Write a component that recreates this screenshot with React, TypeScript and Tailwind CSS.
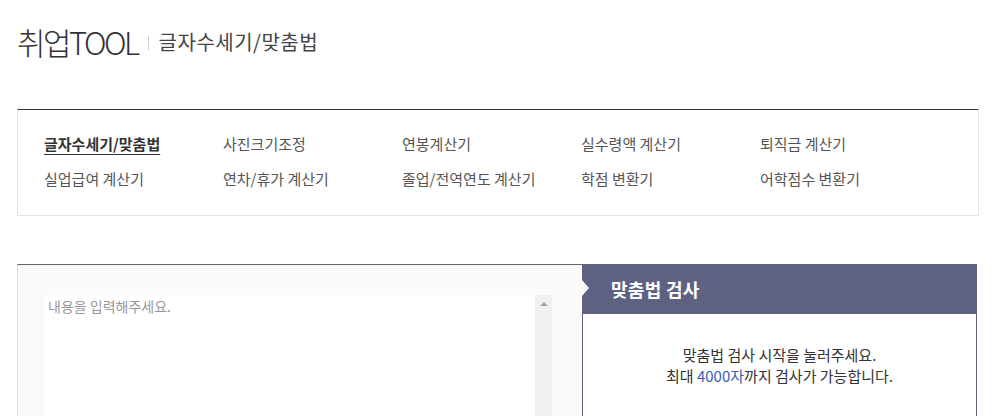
import React from "react";

const navItems = [
  "글자수세기/맞춤법",
  "사진크기조정",
  "연봉계산기",
  "실수령액 계산기",
  "퇴직금 계산기",
  "실업급여 계산기",
  "연차/휴가 계산기",
  "졸업/전역연도 계산기",
  "학점 변환기",
  "어학점수 변환기",
];

const App = () => {
  return (
    <div
      className="w-[996px] h-[416px] overflow-hidden bg-white px-[17px]"
      style={{ fontFamily: '"Noto Sans CJK KR", "Noto Sans", sans-serif' }}
    >
      {/* page title */}
      <div className="h-[109px] pt-[26px]">
        <div className="flex items-center">
          <h1 className="text-[31px] leading-none font-light tracking-[-2.5px] text-[#333]">취업TOOL</h1>
          <span className="mx-[10px] mt-[3px] w-px h-[14px] bg-[#ccc]"></span>
          <span className="mt-[1px] text-[20px] leading-none font-normal text-[#444] tracking-[0.5px]">글자수세기/맞춤법</span>
        </div>
      </div>

      {/* tool menu */}
      <div className="h-[107px] border-t border-t-[#333] border-x border-b border-x-[#e5e5e5] border-b-[#e5e5e5] pt-[16px] pl-[26px]">
        <ul className="grid grid-cols-[179px_179px_179px_179px_179px]">
          {navItems.map((item, i) => (
            <li
              key={item}
              className={`h-[35px] leading-[35px] text-[15px] ${
                i === 0 ? "font-bold text-[#333] underline underline-offset-[4px]" : "text-[#555]"
              }`}
            >
              {item}
            </li>
          ))}
        </ul>
      </div>

      {/* checker */}
      <div className="mt-[48px] flex">
        <div className="w-[565px] h-[160px] border-t border-t-[#666] border-l border-l-[#ddd] bg-[#fafafa] pt-[30px] pl-[26px]">
          <div className="flex h-[130px] w-[508px]">
            <textarea
              className="flex-1 resize-none bg-white px-[4px] py-[1px] text-[14px] leading-[20px] text-[#333] placeholder:text-[#999] outline-none"
              placeholder="내용을 입력해주세요."
            ></textarea>
            <div className="w-[17px] bg-[#f0f0f0] flex justify-center pt-[7px]">
              <span className="w-0 h-0 border-x-[4px] border-x-transparent border-b-[4px] border-b-[#a3a3a3]"></span>
            </div>
          </div>
        </div>

        <div className="w-[395px]">
          <div className="relative h-[50px] bg-[#5e6182] flex items-center pl-[29px]">
            <span className="absolute left-0 top-[16px] w-0 h-0 border-y-[8px] border-y-transparent border-l-[7px] border-l-[#fafafa]"></span>
            <h2 className="text-[18px] font-bold text-white tracking-[0.3px]">맞춤법 검사</h2>
          </div>
          <div className="h-[110px] border-x border-x-[#62657f] pt-[30px] text-center text-[15px] leading-[21px] text-[#333]">
            <p>맞춤법 검사 시작을 눌러주세요.</p>
            <p>
              최대 <span className="text-[#3a5bb8]">4000자</span>까지 검사가 가능합니다.
            </p>
          </div>
        </div>
      </div>
    </div>
  );
};

export default App;
